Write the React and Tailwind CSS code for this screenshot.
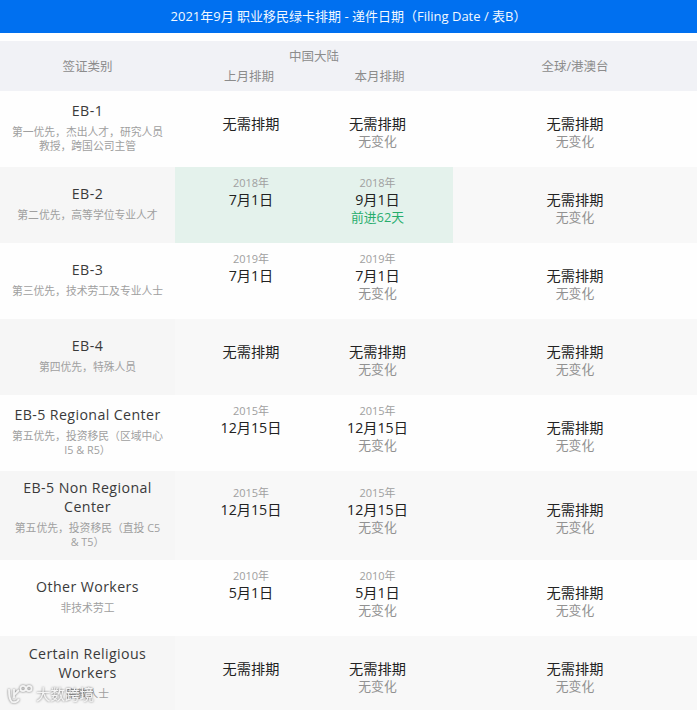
const FONT = 'font-["Open_Sans","Noto_Sans_CJK_SC",sans-serif]'

const NOCHANGE = '无变化'
const NONE = '无需排期'

const rows = [
  { name: 'EB-1', sub: '第一优先\uFF0C杰出人才\uFF0C研究人员 教授\uFF0C跨国公司主管', last: { main: NONE }, cur: { main: NONE, note: NOCHANGE } },
  { name: 'EB-2', sub: '第二优先\uFF0C高等学位专业人才', last: { year: '2018年', main: '7月1日' }, cur: { year: '2018年', main: '9月1日', note: '前进62天', up: true }, green: true },
  { name: 'EB-3', sub: '第三优先\uFF0C技术劳工及专业人士', last: { year: '2019年', main: '7月1日' }, cur: { year: '2019年', main: '7月1日', note: NOCHANGE } },
  { name: 'EB-4', sub: '第四优先\uFF0C特殊人员', last: { main: NONE }, cur: { main: NONE, note: NOCHANGE } },
  { name: 'EB-5 Regional Center', sub: '第五优先\uFF0C投资移民\uFF08区域中心 I5 & R5\uFF09', last: { year: '2015年', main: '12月15日' }, cur: { year: '2015年', main: '12月15日', note: NOCHANGE } },
  { name: 'EB-5 Non Regional Center', sub: '第五优先\uFF0C投资移民\uFF08直投 C5 & T5\uFF09', last: { year: '2015年', main: '12月15日' }, cur: { year: '2015年', main: '12月15日', note: NOCHANGE } },
  { name: 'Other Workers', sub: '非技术劳工', last: { year: '2010年', main: '5月1日' }, cur: { year: '2010年', main: '5月1日', note: NOCHANGE } },
  { name: 'Certain Religious Workers', sub: '宗教人士', last: { main: NONE }, cur: { main: NONE, note: NOCHANGE } },
]

function DateCell({ year, main, note, up, className }) {
  return (
    <div className={`flex flex-col items-center justify-center pb-[10px] text-center ${className}`}>
      <div className="h-[15px] text-[11px] leading-[15px] text-[#a0a0a0]">{year}</div>
      <div className="h-[19px] text-[14.2px] leading-[19px] text-[#222222]">{main}</div>
      <div className={`h-[17px] text-[12.8px] leading-[17px] ${up ? 'text-[#27ad6c]' : 'text-[#919191]'}`}>{note}</div>
    </div>
  )
}

function Row({ row, index }) {
  const odd = index % 2 === 1
  return (
    <div className={`flex min-h-[76px] ${odd ? 'bg-[#f8f8f8]' : 'bg-[#fefefe]'}`}>
      <div className={`flex w-[175px] shrink-0 flex-col items-center justify-center px-[10px] pt-[7px] pb-[11px] text-center ${odd ? 'bg-[#f6f6f6]' : ''}`}>
        <div className="text-[14.2px] leading-[19px] tracking-[0.4px] text-[#3a3a3a]">{row.name}</div>
        <div className="mt-[5px] text-[10.8px] leading-[14px] text-[#a0a0a0]">{row.sub}</div>
      </div>
      <div className={`flex w-[278px] shrink-0 pr-[25px] ${row.green ? 'bg-[#e4f2ec]' : ''}`}>
        <DateCell {...row.last} className="w-[152px]" />
        <DateCell {...row.cur} className="w-[101px]" />
      </div>
      <DateCell main={NONE} note={NOCHANGE} className="flex-1" />
    </div>
  )
}

export default function App() {
  return (
    <div className={`relative h-[710px] w-[697px] overflow-hidden bg-white ${FONT}`}>
      <div className="flex h-[33px] items-center justify-center bg-[#0070f0] text-[13px] text-[#f2f8ff]">
        {'2021年9月 职业移民绿卡排期 - 递件日期\uFF08Filing Date / 表B\uFF09'}
      </div>

      <div className="mt-2 flex h-[50px] bg-[#f1f2f6] text-[12.5px] leading-[20px] text-[#8c8c8c]">
        <div className="flex w-[175px] items-center justify-center pt-[2px]">签证类别</div>
        <div className="w-[278px] pt-[6px]">
          <div className="text-center">中国大陆</div>
          <div className="flex text-center">
            <div className="w-[148px] shrink-0">上月排期</div>
            <div className="w-[113px] shrink-0">本月排期</div>
          </div>
        </div>
        <div className="flex flex-1 items-center justify-center pt-[2px]">全球/港澳台</div>
      </div>

      {rows.map((row, i) => (
        <Row key={row.name} row={row} index={i} />
      ))}

      {/* watermark */}
      <div className="absolute left-[7px] top-[685px] flex items-center gap-[3px] text-[#f4f4f4] [filter:drop-shadow(0_0_1px_rgba(0,0,0,0.55))]">
        <svg width="26" height="20" viewBox="0 0 26 20" fill="none" stroke="currentColor" strokeWidth="1.8">
          <path d="M2 4c0 6 0 10 3 13 4 1 6-1 7-3" />
          <path d="M7 4v9" />
          <path d="M7 10l5-5" />
          <circle cx="16" cy="3.5" r="2.6" />
          <circle cx="22" cy="3.5" r="2.6" />
        </svg>
        <span className="text-[14.5px] leading-[20px]">大数跨境</span>
      </div>
    </div>
  )
}
